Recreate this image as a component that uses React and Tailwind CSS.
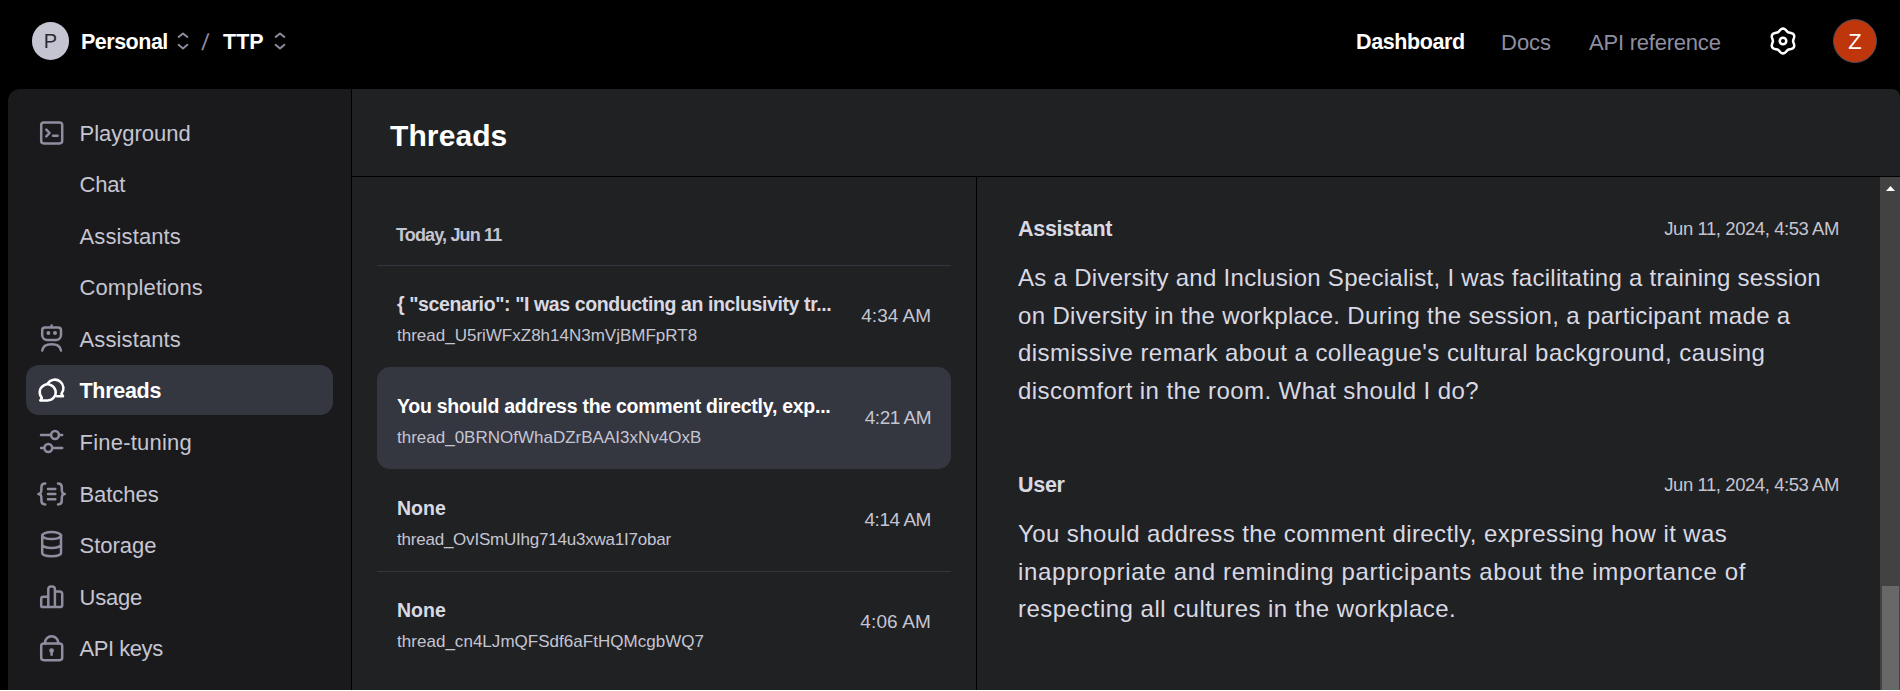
import React from "react";

const icons = {
  playground: (
    <>
      <rect x="5.2" y="5.4" width="21" height="21" rx="2.6" />
      <path d="M10.3 12.6 13.6 16l-3.3 3.4M17 18.8h4.6" />
    </>
  ),
  assistants: (
    <>
      <path d="M15.6 2.4v2M9 4.6h13.2a2.800 2.800 0 0 1 2.800 2.800v4.600a5 5 0 0 1-5 5h-8.800a5 5 0 0 1-5-5V7.400A2.800 2.800 0 0 1 9 4.600zM6.200 27.600c.6-4.200 4.400-6.400 9.400-6.400s8.800 2.200 9.400 6.400" />
      <circle cx="12.4" cy="10" r="2" fill="currentColor" stroke="none" />
      <circle cx="19" cy="10" r="2" fill="currentColor" stroke="none" />
    </>
  ),
  threads: (
    <>
      <path d="M11.7 26.4A8 8 0 1 0 5.9 23.9L4.3 26.4z" />
      <path d="M11.8 9.3A8.6 8.6 0 1 1 25.400 19.800L27 22.200h-6" />
    </>
  ),
  tuning: (
    <>
      <path d="M5 9h10M23 9h3.200M5 22h3.200M16.400 22h9.800" />
      <circle cx="19" cy="9" r="3.9" />
      <circle cx="12.3" cy="22" r="3.9" />
    </>
  ),
  batches: (
    <path d="M9.2 5.6C6.200 5.600 5.400 7 5.400 9.200v2.600c0 2.400-1 4.200-3 4.200 2 0 3 1.800 3 4.200v2.600c0 2.200.8 3.600 3.800 3.600M22 5.600c3 0 3.800 1.400 3.800 3.600v2.600c0 2.400 1 4.200 3 4.200-2 0-3 1.800-3 4.200v2.600c0 2.200-.8 3.600-3.800 3.600M12 11h7.300M12 16.100h7.300M12 21.200h7.300" />
  ),
  storage: (
    <>
      <ellipse cx="15.6" cy="6.6" rx="9.4" ry="3.5" />
      <path d="M6.200 6.600v17.400c0 1.900 4.200 3.200 9.400 3.200s9.400-1.300 9.400-3.200V6.600M6.200 15.600c0 1.900 4.200 3.400 9.400 3.400s9.400-1.500 9.400-3.400" />
    </>
  ),
  usage: (
    <path d="M12.300 26V8a2.600 2.600 0 0 1 2.600-2.600h1.400A2.600 2.600 0 0 1 18.900 8v18M12.300 15.800H7.400a2.200 2.200 0 0 0-2.200 2.200v6.400A1.600 1.600 0 0 0 6.800 26h17.800a1.600 1.600 0 0 0 1.600-1.600V13a2.600 2.600 0 0 0-2.600-2.600h-4.700" />
  ),
  keys: (
    <>
      <rect x="5.2" y="11.4" width="21" height="16.8" rx="2.6" />
      <path d="M9 11.400v-.6a6.600 6.600 0 0 1 13.200 0v.6M15.600 19v3.800" />
      <circle cx="15.6" cy="18.6" r="2.4" fill="currentColor" stroke="none" />
    </>
  ),
};

const nav = [
  { label: "Playground", icon: "playground" },
  { label: "Chat", track: "tracking-[-0.2px]" },
  { label: "Assistants", track: "tracking-[0.12px]" },
  { label: "Completions", track: "tracking-[0.1px]" },
  { label: "Assistants", icon: "assistants", track: "tracking-[0.12px]" },
  { label: "Threads", icon: "threads", active: true },
  { label: "Fine-tuning", icon: "tuning", track: "tracking-[0.22px]" },
  { label: "Batches", icon: "batches", track: "tracking-[-0.05px]" },
  { label: "Storage", icon: "storage" },
  { label: "Usage", icon: "usage", track: "tracking-[-0.2px]" },
  { label: "API keys", icon: "keys", track: "tracking-[-0.45px]" },
];

const threads = [
  { title: '{ "scenario": "I was conducting an inclusivity tr...', id: "thread_U5riWFxZ8h14N3mVjBMFpRT8", time: "4:34 AM", line: true, track: "tracking-[-0.39px]" },
  { title: "You should address the comment directly, exp...", id: "thread_0BRNOfWhaDZrBAAI3xNv4OxB", time: "4:21 AM", active: true, track: "tracking-[-0.26px]", timeTrack: "tracking-[-0.5px]" },
  { title: "None", id: "thread_OvISmUIhg714u3xwa1I7obar", time: "4:14 AM", idTrack: "tracking-[-0.22px]", timeTrack: "tracking-[-0.45px]" },
  { title: "None", id: "thread_cn4LJmQFSdf6aFtHQMcgbWQ7", time: "4:06 AM", line: true, idTrack: "tracking-[0.03px]", timeTrack: "tracking-[0.15px]" },
];

const messages = [
  {
    role: "Assistant",
    lines: [
      ["As a Diversity and Inclusion Specialist, I was facilitating a training session", "tracking-[0.29px]"],
      ["on Diversity in the workplace. During the session, a participant made a", "tracking-[0.34px]"],
      ["dismissive remark about a colleague's cultural background, causing", "tracking-[0.46px]"],
      ["discomfort in the room. What should I do?", "tracking-[0.41px]"],
    ],
  },
  {
    role: "User",
    lines: [
      ["You should address the comment directly, expressing how it was", "tracking-[0.4px]"],
      ["inappropriate and reminding participants about the importance of", "tracking-[0.64px]"],
      ["respecting all cultures in the workplace.", "tracking-[0.47px]"],
    ],
  },
];

// Six-lobed outline centred on the origin.
const gear =
  "M" +
  Array.from({ length: 72 }, (_, i) => {
    const a = (i / 72) * Math.PI * 2;
    const r = 11.3 + 1.2 * Math.cos(6 * a);
    return `${(r * Math.sin(a)).toFixed(2)} ${(-r * Math.cos(a)).toFixed(2)}`;
  }).join("L") +
  "Z";

function UpDown() {
  return (
    <svg width="12" height="18" viewBox="0 0 12 18" fill="none" stroke="#8e8ea0" strokeWidth="1.9" strokeLinecap="round" strokeLinejoin="round">
      <path d="M1.600 5 6 1.400 10.400 5M1.600 12.800 6 16.400l4.400-3.600" />
    </svg>
  );
}

function Header() {
  return (
    <header className="flex h-[89px] shrink-0 items-center pb-[7px] pl-8 pr-[23px] text-[22px]">
      <div className="flex h-[38px] w-[37px] items-center justify-center rounded-full bg-[#c5c5d2] text-xl text-[#2a2b32]">P</div>
      <span className="ml-3 mt-[3px] w-24 text-[21.5px] font-bold tracking-[-0.5px] text-white">Personal</span>
      <UpDown />
      <span className="ml-[13px] mt-[2px] w-[21px] text-[23px] text-[#8e8ea0]">
        <span className="inline-block -skew-x-6">/</span>
      </span>
      <span className="mt-[3px] w-[51px] text-[21.5px] font-bold text-white">TTP</span>
      <UpDown />
      <nav className="ml-auto mt-[3px] flex items-center text-[#8e8ea0]">
        <span className="w-[145px] text-[21.5px] font-bold tracking-[-0.4px] text-white">Dashboard</span>
        <span className="w-[88px]">Docs</span>
        <span className="w-[179px] tracking-[-0.22px]">API reference</span>
      </nav>
      <svg className="mr-[35px]" width="30" height="30" viewBox="-15 -15 30 30" fill="none" stroke="#fff" strokeWidth="2.500">
        <path d={gear} strokeLinejoin="round" />
        <circle r="3.300" />
      </svg>
      <div className="flex size-11 items-center justify-center rounded-full border border-[#4a4b5a] bg-[#c0360c] text-[22px] text-white">Z</div>
    </header>
  );
}

function Sidebar() {
  return (
    <aside className="flex w-[344px] shrink-0 flex-col gap-[1.6px] rounded-tl-xl border-r border-black bg-[#1a1a1c] px-[18px] pt-[18px]">
      {nav.map((n, i) => (
        <div
          key={i}
          className={
            n.active
              ? "flex h-[50px] shrink-0 items-center rounded-[13px] bg-[#343640] pl-[10px] text-white"
              : "flex h-[50px] shrink-0 items-center pl-[10px] text-[#8e8ea0]"
          }
        >
          <div className="flex w-[43.5px] shrink-0">
            {n.icon && (
              <svg width="31" height="31" viewBox="0 0 31 31" fill="none" stroke="currentColor" strokeWidth="2.5" strokeLinecap="round" strokeLinejoin="round">
                {icons[n.icon]}
              </svg>
            )}
          </div>
          <span className={`mt-0.5 ${n.active ? "text-[21.5px] font-bold tracking-[-0.3px]" : "text-[22px] text-[#c5c5d2]"} ${n.track || ""}`}>{n.label}</span>
        </div>
      ))}
    </aside>
  );
}

function ThreadList() {
  return (
    <section className="flex w-[625px] shrink-0 flex-col border-r border-black px-[25px]">
      <h2 className="flex h-[88px] shrink-0 items-end pb-4 pl-[19px] text-lg font-bold tracking-[-0.85px] text-[#c5c5d2]">Today, Jun 11</h2>
      {threads.map((t) => (
        <div
          key={t.id}
          className={`flex h-[102px] shrink-0 items-center justify-between px-5 ${t.active ? "rounded-[13px] bg-[#343640]" : ""} ${t.line ? "border-t border-[#343640]" : ""}`}
        >
          <div className="whitespace-nowrap pt-[7px]">
            <div className={`text-[19.5px] font-bold leading-[31px] ${t.active ? "text-white" : "text-[#d9d9e3]"} ${t.track || ""}`}>{t.title}</div>
            <div className={`text-[17px] leading-[31px] text-[#c5c5d2] ${t.idTrack || ""}`}>{t.id}</div>
          </div>
          <div className={`whitespace-nowrap text-[19px] text-[#c5c5d2] ${t.timeTrack || ""}`}>{t.time}</div>
        </div>
      ))}
    </section>
  );
}

function Messages() {
  return (
    <section className="flex min-w-0 grow flex-col gap-[59px] pl-[41px] pr-[41px] pt-[35px] text-[#d9d9e3]">
      {messages.map((m) => (
        <article key={m.role} className="flex flex-col gap-[13px]">
          <div className="flex h-[34px] items-center justify-between">
            <span className="text-[21.5px] font-bold tracking-[-0.3px]">{m.role}</span>
            <span className="text-[18.5px] tracking-[-0.43px] text-[#c5c5d2]">Jun 11, 2024, 4:53 AM</span>
          </div>
          <div className="whitespace-nowrap text-2xl leading-[37.5px]">
            {m.lines.map(([text, track]) => (
              <div key={text} className={`leading-[37.5px] ${track}`}>{text}</div>
            ))}
          </div>
        </article>
      ))}
    </section>
  );
}

function Scrollbar() {
  return (
    <div className="flex w-5 shrink-0 flex-col items-center bg-[#424242] pl-0.5 pr-px">
      <svg className="mt-[9px] shrink-0" width="9" height="5" viewBox="0 0 9 5" fill="#fff">
        <path d="M0 5 4.500 0 9 5z" />
      </svg>
      <div className="mt-auto h-[104px] w-full bg-[#686868]" />
    </div>
  );
}

export default function App() {
  return (
    <div className="h-[691px] w-[1900px] overflow-hidden bg-white pb-px font-['Liberation_Sans',sans-serif]">
      <div className="flex h-full flex-col overflow-hidden bg-black">
        <Header />
        <div className="flex min-h-0 grow pl-2">
          <Sidebar />
          <main className="flex min-w-0 grow flex-col rounded-tr-lg bg-[#202123]">
            <div className="flex h-[88px] shrink-0 items-center border-b border-black pl-[38px] pt-[6px]">
              <h1 className="text-3xl font-bold tracking-[0.1px] text-white">Threads</h1>
            </div>
            <div className="flex min-h-0 grow">
              <ThreadList />
              <Messages />
              <Scrollbar />
            </div>
          </main>
        </div>
      </div>
    </div>
  );
}
